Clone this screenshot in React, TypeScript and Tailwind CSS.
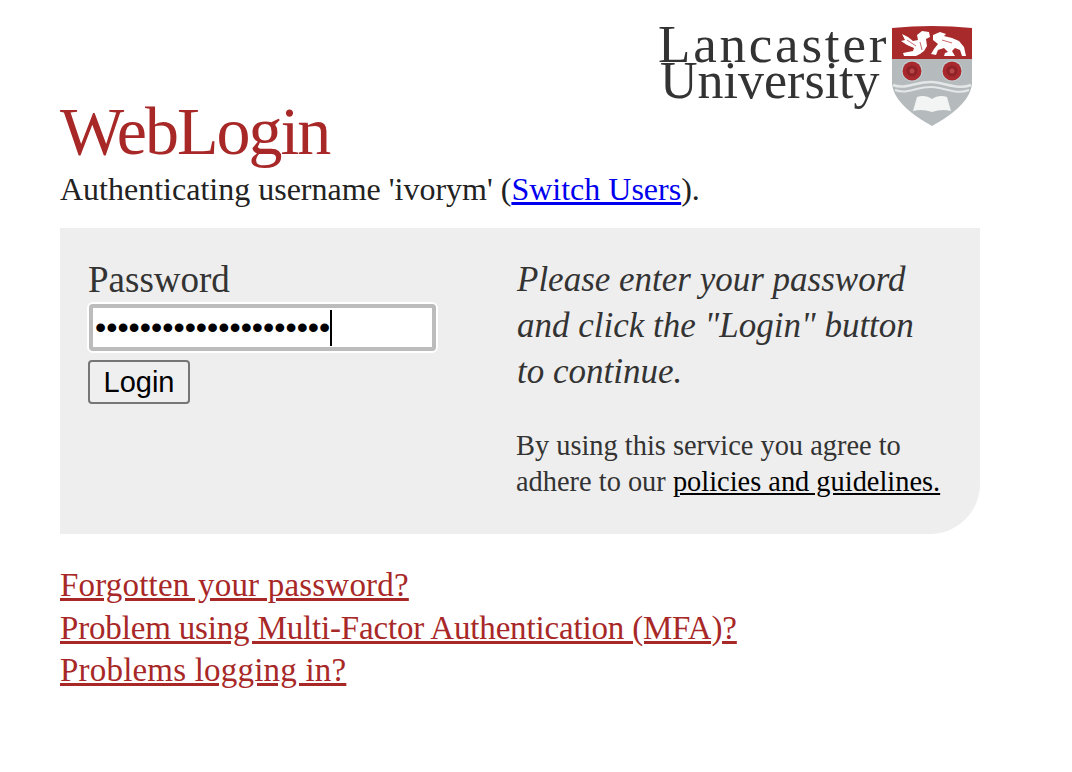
import React from 'react';

const slab = { fontFamily: '"Liberation Serif", serif' };

const Rose: React.FC<{ cx: number; cy: number }> = ({ cx, cy }) => (
  <g>
    <circle cx={cx} cy={cy} r="10.5" fill="#c3d0d3" />
    <circle cx={cx} cy={cy} r="9.5" fill="#a82a2e" />
    <circle cx={cx} cy={cy} r="5.5" fill="#8f2226" />
    <circle cx={cx} cy={cy} r="2.5" fill="#b8474a" />
  </g>
);

// Lancaster crest, drawn by hand
const Crest: React.FC = () => (
  <svg width="80" height="100" viewBox="0 0 80 100" className="shrink-0">
    <path d="M0 2 Q40 -2 80 2 L80 33 L0 33 Z" fill="#a82a2a" />
    <path d="M0 33 L80 33 L80 58 C78 76 58 90 40 100 C22 90 2 76 0 58 Z" fill="#b5bbbd" />
    {/* lions */}
    <path d="M10 8 L16 11 L21 15 L26 14 L25 9 L30 5 L37 6 L38 11 L34 13 L35 20 L32 25 L28 28 L24 30 L12 30 L11 27 L21 25 L22 22 L15 19 L9 15 L13 14 Z" fill="#fff" />
    <path d="M41 9 L48 6 L54 8 L52 10 L60 12 L67 15 L72 21 L74 30 L70 30 L68 24 L63 22 L60 25 L63 30 L52 30 L53 27 L56 26 L52 22 L46 24 L44 29 L39 28 L42 23 L46 18 L41 14 Z" fill="#fff" />
    <path d="M15 14 L24 20 M28 16 L30 24 M50 14 L60 17" stroke="#c96a6a" strokeWidth="1" fill="none" />
    <Rose cx={20} cy={45} />
    <Rose cx={60} cy={45} />
    {/* waves */}
    <path d="M1 59 C14 64 26 55 40 56 C54 57 66 64 79 59" fill="none" stroke="#e4e7e8" strokeWidth="2.5" />
    <path d="M3 64 C16 69 26 60 40 61 C54 62 64 69 77 64" fill="none" stroke="#e4e7e8" strokeWidth="2" />
    {/* book */}
    <path d="M25 71 C30 69 36 70 40 73 C44 70 50 69 55 71 L59 85 C52 83 46 84 40 86 C34 84 28 83 21 85 Z" fill="#f3f4f4" />
  </svg>
);

const Logo: React.FC = () => (
  <div className="float-right mr-[100px] mt-[26px] flex items-start gap-[5px]">
    <div className="text-[#333] w-[229px] whitespace-nowrap" style={slab}>
      <div className="text-[53px] leading-[36px] tracking-[2.8px]">Lancaster</div>
      <div className="text-[52px] leading-[38px] ml-[2px]">University</div>
    </div>
    <Crest />
  </div>
);

export default function App() {
  return (
    <div className="min-h-[772px] bg-white pl-[60px] w-[1072px]" style={slab}>
      <Logo />
      <div className="pt-[91px]">
        <h1 className="text-[68px] leading-[80px] text-[#a82828] tracking-[-2px]">WebLogin</h1>
        <p className="text-[32px] leading-[36px] text-[#222]">
          Authenticating username 'ivorym' (
          <a href="#" className="text-[#0000ee] underline">Switch Users</a>
          ).
        </p>
      </div>

      <div className="mt-[21px] w-[920px] h-[306px] bg-[#eeeeee] rounded-br-[50px] flex pl-[28px] pt-[30px]">
        <div className="w-[429px] shrink-0">
          <div className="text-[37px] leading-[44px] text-[#333]">Password</div>
          <div className="relative w-[351px] h-[51px] -ml-px rounded-[6px] border-2 border-white">
            <input
              type="password"
              readOnly
              value="ivorymivorymivorymivo"
              className="w-full h-full rounded-[4px] border-4 border-[#bcbcbc] bg-white pl-[2px] text-[32px] text-black outline-none"
              style={{ fontFamily: '"Liberation Sans", sans-serif' }}
            />
            <span className="absolute left-[241px] top-[6px] w-[2px] h-[36px] bg-black" />
          </div>
          <button
            className="mt-[7px] block w-[102px] h-[44px] rounded-[4px] border-2 border-[#767676] bg-[#efefef] text-[29px] leading-none text-black"
            style={{ fontFamily: '"Liberation Sans", sans-serif' }}
          >
            Login
          </button>
        </div>
        <div className="-mt-px">
          <p className="text-[35px] leading-[46px] italic text-[#333] w-[420px] whitespace-nowrap">
            Please enter your password<br />and click the "Login" button<br />to continue.
          </p>
          <p className="mt-[33px] -ml-px text-[28.4px] leading-[36px] text-[#333] w-[440px] whitespace-nowrap">
            By using this service you agree to<br />
            adhere to our <a href="#" className="text-black underline">policies and guidelines.</a>
          </p>
        </div>
      </div>

      <div className="mt-[30px] flex flex-col text-[33px] leading-[42.5px] text-[#a82828] items-start">
        <a href="#" className="underline tracking-[0.2px]">Forgotten your password?</a>
        <a href="#" className="underline tracking-[-0.17px]">Problem using Multi-Factor Authentication (MFA)?</a>
        <a href="#" className="underline tracking-[0.2px]">Problems logging in?</a>
      </div>
    </div>
  );
}
